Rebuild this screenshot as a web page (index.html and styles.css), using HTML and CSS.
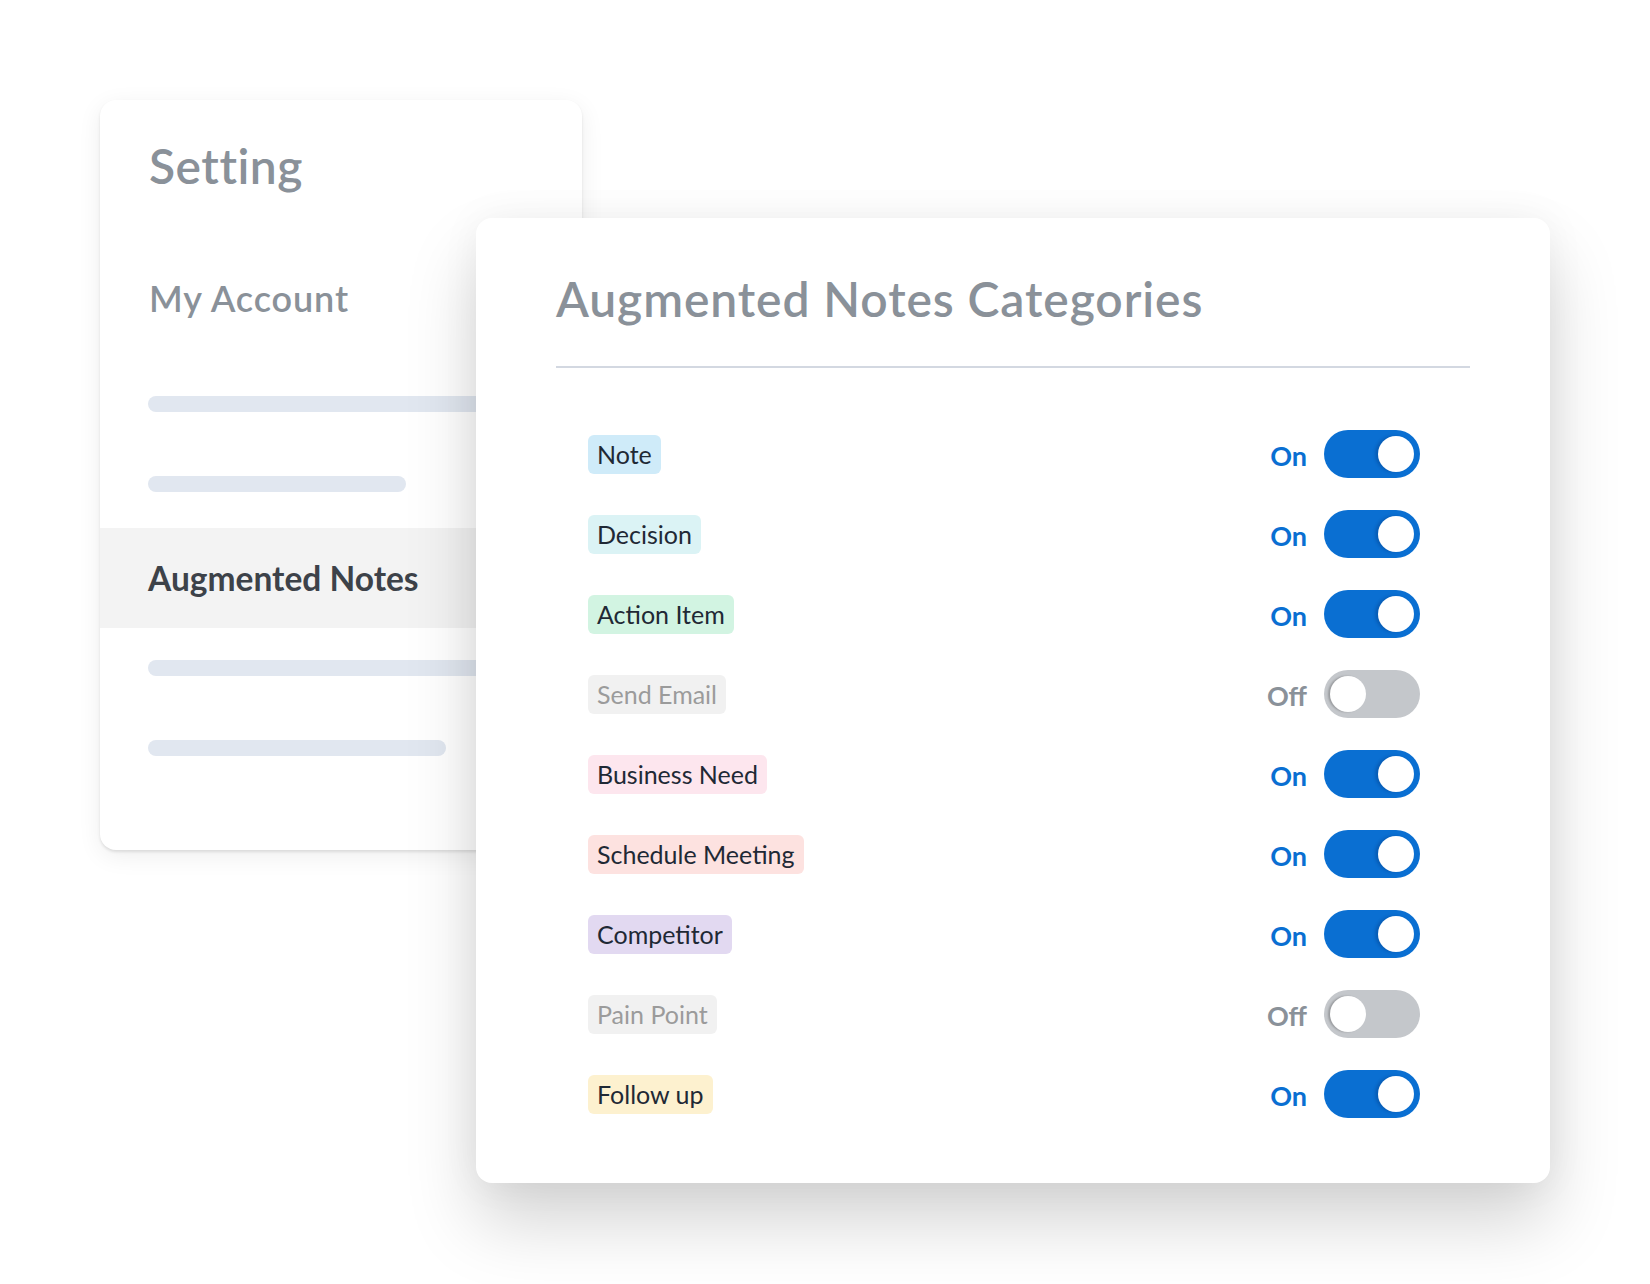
FILE: index.html
```html
<!DOCTYPE html>
<html lang="en">
<head>
<meta charset="utf-8">
<title>Augmented Notes Settings</title>
<link rel="stylesheet" href="styles.css">
</head>
<body>
<div class="stage">
  <aside class="side-card">
    <h1 class="side-title">Setting</h1>
    <div class="side-item">My Account</div>
    <div class="skeleton skeleton-long first"></div>
    <div class="skeleton skeleton-mid"></div>
    <div class="side-active">Augmented Notes</div>
    <div class="skeleton skeleton-long"></div>
    <div class="skeleton skeleton-short"></div>
  </aside>
  <main class="main-card">
    <h2 class="main-title">Augmented Notes Categories</h2>
    <div class="divider"></div>
    <ul class="cat-list">
      <li class="cat-row"><span class="tag tag-note">Note</span><span class="state on">On</span><span class="toggle on"><span class="knob"></span></span></li>
      <li class="cat-row"><span class="tag tag-decision">Decision</span><span class="state on">On</span><span class="toggle on"><span class="knob"></span></span></li>
      <li class="cat-row"><span class="tag tag-action">Action Item</span><span class="state on">On</span><span class="toggle on"><span class="knob"></span></span></li>
      <li class="cat-row"><span class="tag tag-off">Send Email</span><span class="state off">Off</span><span class="toggle off"><span class="knob"></span></span></li>
      <li class="cat-row"><span class="tag tag-business">Business Need</span><span class="state on">On</span><span class="toggle on"><span class="knob"></span></span></li>
      <li class="cat-row"><span class="tag tag-schedule">Schedule Meeting</span><span class="state on">On</span><span class="toggle on"><span class="knob"></span></span></li>
      <li class="cat-row"><span class="tag tag-competitor">Competitor</span><span class="state on">On</span><span class="toggle on"><span class="knob"></span></span></li>
      <li class="cat-row"><span class="tag tag-off">Pain Point</span><span class="state off">Off</span><span class="toggle off"><span class="knob"></span></span></li>
      <li class="cat-row"><span class="tag tag-follow">Follow up</span><span class="state on">On</span><span class="toggle on"><span class="knob"></span></span></li>
    </ul>
  </main>
</div>
</body>
</html>
```
FILE: styles.css
```css
* { box-sizing: border-box; }
html, body {
  margin: 0;
  padding: 0;
  background: #ffffff;
  font-family: "Lato", "Open Sans", "Liberation Sans", sans-serif;
}
body {
  min-height: 1284px;
  padding: 100px 0 101px 100px;
}
.stage {
  display: grid;
  grid-template-columns: 376px 106px 968px;
  grid-template-rows: 118px 632px 333px;
}
.side-card {
  grid-column: 1 / 3;
  grid-row: 1 / 3;
  background: #ffffff;
  border-radius: 16px;
  box-shadow: 0 2px 3px rgba(0,0,0,0.10), 0 6px 24px rgba(0,0,0,0.07);
  padding: 37px 0 0 0;
  display: flex;
  flex-direction: column;
  overflow: hidden;
}
.side-title {
  margin: 0;
  padding-left: 49px;
  font-size: 48px;
  line-height: 58px;
  font-weight: 600;
  letter-spacing: 0.5px;
  color: #8a9199;
}
.side-item {
  margin-top: 81px;
  padding-left: 49px;
  font-size: 36px;
  line-height: 44px;
  font-weight: 600;
  letter-spacing: 0.9px;
  color: #8a9199;
}
.skeleton {
  height: 16px;
  border-radius: 8px;
  background: #e1e7f0;
  margin-left: 48px;
}
.skeleton.first { margin-top: 76px; }
.skeleton-long { width: 400px; }
.skeleton-mid { width: 258px; margin-top: 64px; }
.skeleton-short { width: 298px; margin-top: 64px; }
.side-active {
  margin-top: 36px;
  margin-bottom: 32px;
  height: 100px;
  display: flex;
  align-items: center;
  padding-left: 48px;
  background: #f3f3f3;
  font-size: 33.5px;
  font-weight: 700;
  color: #3d4249;
}
.main-card {
  grid-column: 2 / 4;
  grid-row: 2 / 4;
  background: #ffffff;
  border-radius: 16px;
  box-shadow: 0 40px 70px rgba(0,0,0,0.17), 0 0 40px rgba(0,0,0,0.05);
  padding: 52px 80px 49px 80px;
  display: flex;
  flex-direction: column;
}
.main-title {
  margin: 0;
  font-size: 48px;
  line-height: 58px;
  font-weight: 600;
  letter-spacing: 0.9px;
  color: #8a9199;
}
.divider {
  margin-top: 38px;
  height: 2px;
  background: #d3d8e1;
}
.cat-list {
  list-style: none;
  margin: 46px 0 0 0;
  padding: 0;
  display: flex;
  flex-direction: column;
}
.cat-row {
  height: 80px;
  display: flex;
  align-items: center;
  padding: 0 50px 0 32px;
}
.tag {
  height: 39px;
  display: inline-flex;
  align-items: center;
  padding: 0 9px;
  border-radius: 6px;
  font-size: 25px;
  font-weight: 400;
  color: #1f2935;
}
.tag-note { background: #cfebf9; }
.tag-decision { background: #dbf3f5; }
.tag-action { background: #d2f4e2; }
.tag-off { background: #f1f1f1; color: #9b9b9b; }
.tag-business { background: #fde6ee; }
.tag-schedule { background: #fde2e0; }
.tag-competitor { background: #e2d9f1; }
.tag-follow { background: #fdf1cf; }
.state {
  margin-left: auto;
  margin-right: 17px;
  font-size: 27px;
  font-weight: 700;
  padding-top: 2px;
}
.state.on { color: #0a6fd2; }
.state.off { color: #8a9199; }
.toggle {
  width: 96px;
  height: 48px;
  border-radius: 24px;
  display: flex;
  align-items: center;
  padding: 0 6px;
}
.toggle.on { background: #0a6fd2; justify-content: flex-end; }
.toggle.off { background: #c4c7cb; justify-content: flex-start; }
.knob {
  width: 36px;
  height: 36px;
  border-radius: 50%;
  background: #ffffff;
}
.toggle.on .knob { box-shadow: -3px 0 3px rgba(0,40,100,0.25); }
.toggle.off .knob { box-shadow: -2px 0 2px rgba(0,0,0,0.22); }
```
